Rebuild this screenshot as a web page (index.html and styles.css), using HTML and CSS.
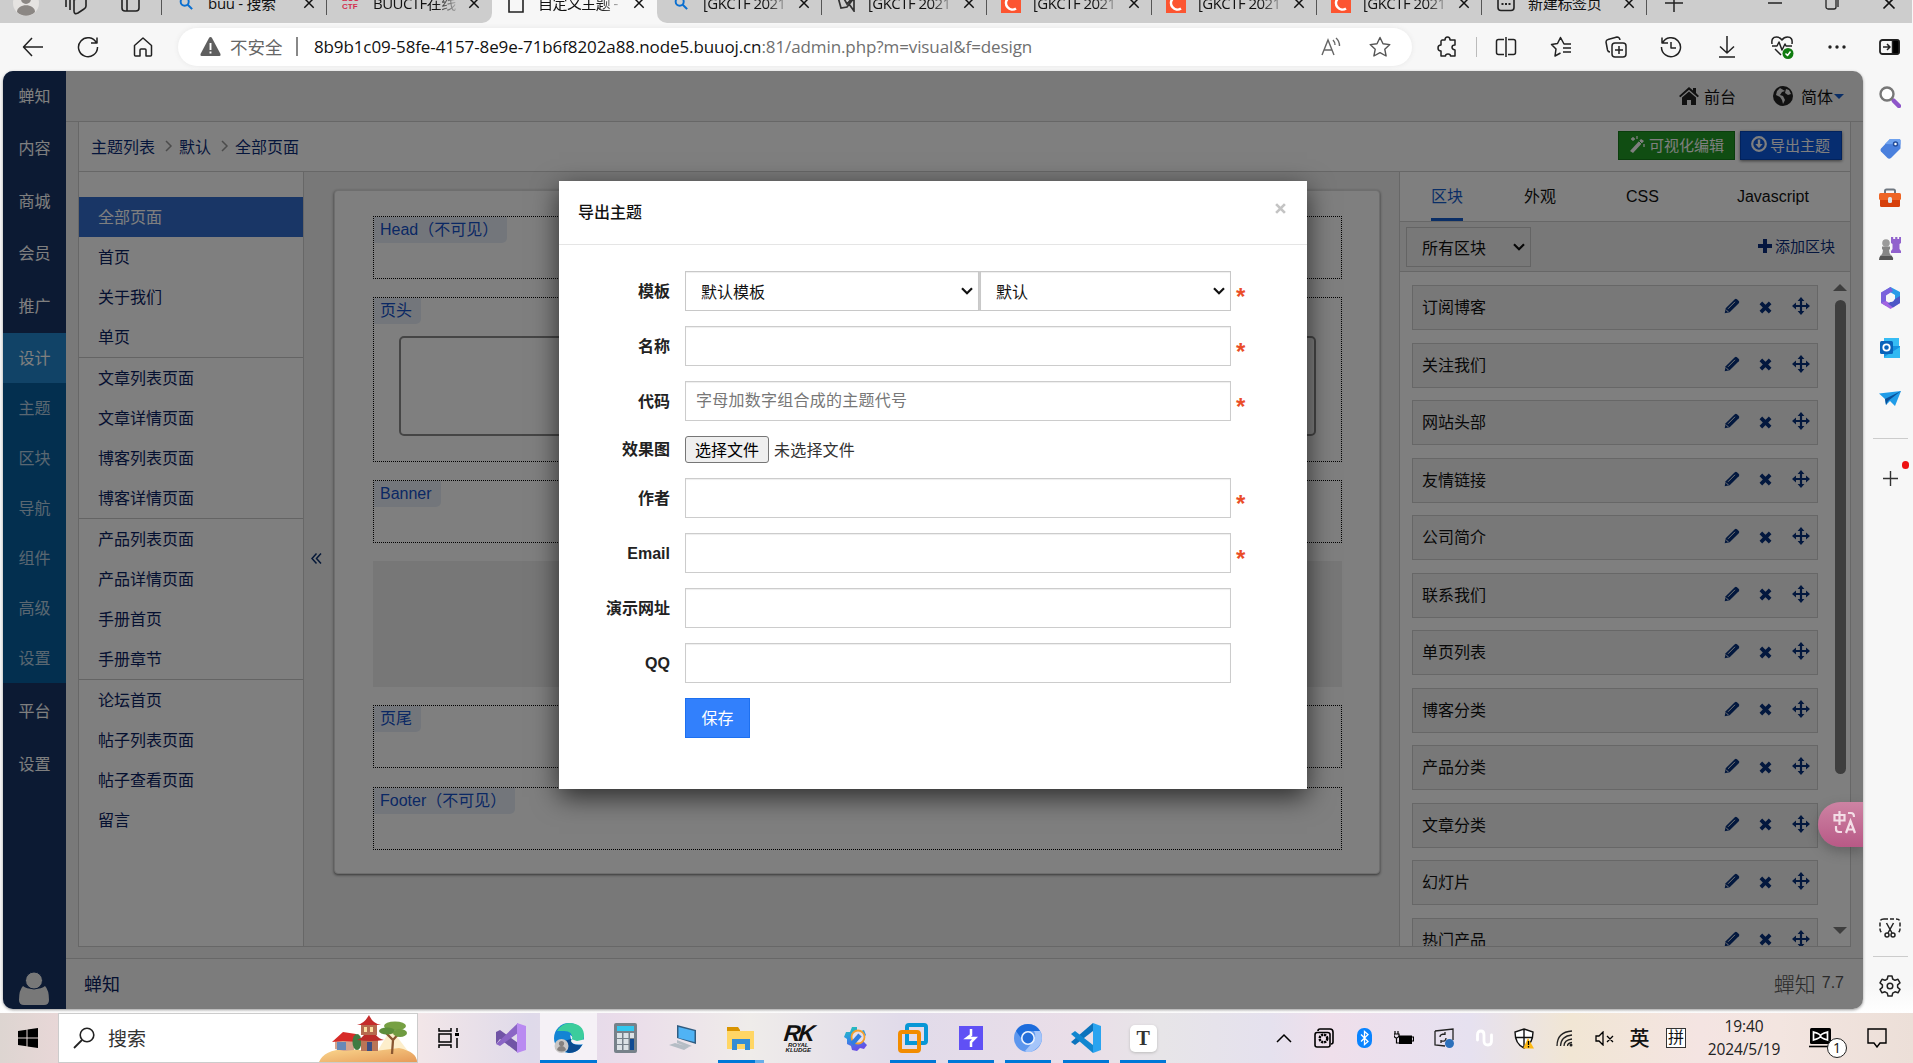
FILE: index.html
```html
<!DOCTYPE html>
<html lang="zh-CN">
<head>
<meta charset="utf-8">
<title>导出主题</title>
<link rel="stylesheet" href="styles.css">
</head>
<body>
<svg width="0" height="0" class="defs">
  <symbol id="x" viewBox="0 0 14 14"><path d="M1.5 1.5l11 11M12.5 1.5l-11 11" fill="none" stroke="currentColor" stroke-width="1.7"/></symbol>
  <symbol id="bing" viewBox="0 0 16 16"><circle cx="6.5" cy="6.5" r="4.6" fill="none" stroke="#0a6fd0" stroke-width="2.2"/><path d="M10 10l5 5" stroke="#0a6fd0" stroke-width="2.4"/></symbol>
  <symbol id="cblog" viewBox="0 0 20 20"><path d="M0 0h20v20H0z" fill="#fc5531"/><path d="M15 4.500A6.500 6.500 0 1 0 15 15.500" fill="none" stroke="#fff" stroke-width="2.600"/></symbol>
  <symbol id="pen" viewBox="0 0 16 16"><path d="M.7 15.300l1-5L10.800 1.200q1-1 2.200 0l1.800 1.800q1 1 0 2.200L5.700 14.300z" fill="currentColor"/><path d="M4 10.800L11 3.800M2 11.600L4.400 14" stroke="#e9e9e9" stroke-width="1"/></symbol>
  <symbol id="del" viewBox="0 0 14 14"><path d="M2 2l10 10M12 2L2 12" stroke="currentColor" stroke-width="4" fill="none"/></symbol>
  <symbol id="move" viewBox="0 0 18 18"><path d="M9 2v14M2 9h14" stroke="currentColor" stroke-width="2.200"/><path d="M9 0l3.400 4H5.600zM9 18l3.400-4H5.600zM0 9l4-3.400v6.800zM18 9l-4-3.400v6.800z" fill="currentColor"/></symbol>
  <symbol id="chev" viewBox="0 0 12 8"><path d="M1 1.200l5 5 5-5" fill="none" stroke="currentColor" stroke-width="2.200"/></symbol>
</svg>

<header class="tabstrip">
  <div class="tabs-before">
    <span class="tool w52"><svg width="26" height="26" viewBox="0 0 26 26"><circle cx="13" cy="13" r="13" fill="#e5e3e1"/><circle cx="13" cy="9" r="5" fill="#8b8784"/><path d="M4 22c0-9 18-9 18 0-5 5-13 5-18 0z" fill="#8b8784"/></svg></span>
    <span class="tool w48"><svg width="22" height="24" viewBox="0 0 22 24" fill="none" stroke="#222" stroke-width="1.600"><path d="M9 9l9-5q3-1 3 2v9q0 2-2 3l-6 4q-4 2-4-2zM5 19V8l8-5M1 16V7l7-5"/></svg></span>
    <span class="tool w58"><svg width="20" height="20" viewBox="0 0 20 20" fill="none" stroke="#222" stroke-width="1.600"><rect x="1" y="1" width="17" height="17" rx="3"/><path d="M1 6h17M6 1v17"/></svg></span>
    <div class="tab"><i class="fav"><svg width="14" height="14"><use href="#bing"/></svg></i><span>buu - 搜索</span><svg class="tx"><use href="#x"/></svg></div>
    <div class="tab"><i class="fav"><b class="buu">BUU<br>CTF</b></i><span class="fade">BUUCTF在线</span><svg class="tx"><use href="#x"/></svg></div>
  </div>
  <div class="tab active"><i class="fav"><svg width="16" height="20" viewBox="0 0 16 20"><path d="M1 1h9l5 5v13H1zM10 1v5h5" fill="none" stroke="#222" stroke-width="1.600"/></svg></i><span class="fade">自定义主题 -</span><svg class="tx"><use href="#x"/></svg></div>
  <div class="tabs-after">
    <div class="tab"><i class="fav"><svg width="14" height="14"><use href="#bing"/></svg></i><span class="fade">[GKCTF 2021</span><svg class="tx"><use href="#x"/></svg></div>
    <div class="tab"><i class="fav"><svg width="18" height="18" viewBox="0 0 18 18"><path d="M1 3l3 11 6-1L17 4v13l-5-7M5 1l5 9 6-7" fill="none" stroke="#333" stroke-width="1.700"/></svg></i><span class="fade">[GKCTF 2021</span><svg class="tx"><use href="#x"/></svg></div>
    <div class="tab"><i class="fav"><svg width="20" height="20"><use href="#cblog"/></svg></i><span class="fade">[GKCTF 2021</span><svg class="tx"><use href="#x"/></svg></div>
    <div class="tab"><i class="fav"><svg width="20" height="20"><use href="#cblog"/></svg></i><span class="fade">[GKCTF 2021</span><svg class="tx"><use href="#x"/></svg></div>
    <div class="tab"><i class="fav"><svg width="20" height="20"><use href="#cblog"/></svg></i><span class="fade">[GKCTF 2021</span><svg class="tx"><use href="#x"/></svg></div>
    <div class="tab"><i class="fav"><svg width="18" height="18" viewBox="0 0 18 18"><rect x="1" y="1" width="16" height="15.500" rx="3" fill="none" stroke="#222" stroke-width="1.600"/><path d="M4.500 10h2M8 10h2M11.500 10h2" stroke="#222" stroke-width="2"/></svg></i><span>新建标签页</span><svg class="tx"><use href="#x"/></svg></div>
    <span class="tool w56"><svg width="18" height="18" viewBox="0 0 18 18"><path d="M9 0v18M0 9h18" stroke="#222" stroke-width="1.500"/></svg></span>
    <span class="winbtns">
      <svg width="14" height="14" viewBox="0 0 14 14"><path d="M0 7h14" stroke="#222" stroke-width="1.500"/></svg>
      <svg width="14" height="16" viewBox="0 0 14 16" fill="none" stroke="#222" stroke-width="1.300"><rect x="1" y="3" width="10" height="11" rx="2"/><path d="M4 1h7q2 0 2 2v9"/></svg>
      <svg width="14" height="14"><use href="#x"/></svg>
    </span>
  </div>
</header>

<div class="toolbar">
  <span class="tb"><svg width="22" height="20" viewBox="0 0 22 20"><path d="M21 10H1.500M10 1L1.500 10l8.500 9"/></svg></span>
  <span class="tb"><svg width="22" height="22" viewBox="0 0 22 22"><path d="M19.500 7A9.500 9.500 0 1 0 20.500 11M20 1.500V7h-6"/></svg></span>
  <span class="tb"><svg width="20" height="20" viewBox="0 0 20 20"><path d="M1.500 8.500L10 1l8.500 7.500V18q0 1-1 1H13v-6q0-1-1-1H8q-1 0-1 1v6H2.500q-1 0-1-1z"/></svg></span>
  <div class="address">
    <svg class="warn" width="21" height="19" viewBox="0 0 21 19"><path d="M10.500 0q1 0 1.500 1l8.500 16q.5 2-1 2H1.500q-1.500 0-1-2L9 1q.500-1 1.500-1z" fill="#5f5f5f"/><path d="M10.500 6v7M10.500 14.500v2" stroke="#fff" stroke-width="1.900"/></svg>
    <span class="insecure">不安全</span><i class="bar"></i>
    <span class="url">8b9b1c09-58fe-4157-8e9e-71b6f8202a88.node5.buuoj.cn<em>:81/admin.php?m=visual&amp;f=design</em></span>
    <svg class="read" width="20" height="20" viewBox="0 0 20 20" fill="none" stroke="#666" stroke-width="1.400"><path d="M1 18L7 3l6 15M3 13h8M12 3q2 2 2 5M15 1q3.500 3 3.500 8"/></svg>
    <svg class="star" width="22" height="22" viewBox="0 0 22 22"><path d="M11 1.500l3 6.300 6.800.8-5 4.700 1.300 6.700L11 16.700 4.900 20l1.300-6.700-5-4.700 6.800-.8z" fill="none" stroke="#555" stroke-width="1.400" stroke-linejoin="round"/></svg>
  </div>
  <span class="tb"><svg width="20" height="22" viewBox="0 0 20 22"><path d="M5 4h3q0-3 2.500-3T13 4h5v5q-3 0-3 2.200T18 14v6h-4.500q0-2-2.500-2t-2.500 2H4v-5Q1 15 1 12t3-3V5z"/></svg></span>
  <i class="tdiv"></i>
  <span class="tb"><svg width="22" height="20" viewBox="0 0 22 20"><path d="M9 2.500H3.500q-2 0-2 2v11q0 2 2 2H9M13 2.500h5.500q2 0 2 2v11q0 2-2 2H13M11 0v20"/></svg></span>
  <span class="tb"><svg width="22" height="22" viewBox="0 0 22 22"><path d="M18 8h-4L10.500 1.500 7.500 7.500l-6 1 4.500 4.500-1 7 5.500-3M13 12h8M13 16h8M15 8h6"/></svg></span>
  <span class="tb"><svg width="22" height="22" viewBox="0 0 22 22"><rect x="7" y="7" width="14" height="14" rx="3"/><path d="M14 10v8M10 14h8M5 16q-2 0-2.500-2L1 6q0-2 2-2.500L12 1q2.500 0 3 3"/></svg></span>
  <span class="tb"><svg width="22" height="22" viewBox="0 0 22 22"><path d="M2.500 7A9.500 9.500 0 1 1 1.500 11M2 1.500V7h6M11 6v6h5"/></svg></span>
  <span class="tb"><svg width="18" height="22" viewBox="0 0 18 22"><path d="M9 0v17M2 10.500L9 17l7-6.500M1 21h16"/></svg></span>
  <span class="tb"><svg width="24" height="24" viewBox="0 0 24 24"><path d="M2 9Q1 2 6.500 2 10 2 12 5q2-3 5.500-3Q23 2 22 9M2 11h5l2-4 3 8 3-6 1 2h6M5 14l6 6"/><circle cx="18" cy="18.500" r="5.500" fill="#107c10" stroke="none"/><path d="M15.500 18.500l2 2 3-4" stroke="#fff"/></svg></span>
  <span class="tb"><svg width="20" height="6" viewBox="0 0 20 6"><g fill="#222" stroke="none"><circle cx="3" cy="3" r="1.700"/><circle cx="10" cy="3" r="1.700"/><circle cx="17" cy="3" r="1.700"/></g></svg></span>
  <span class="tb last"><svg width="21" height="16" viewBox="0 0 21 16"><rect x="1" y="1" width="19" height="14" rx="2.500" stroke-width="1.800"/><path d="M13.500 1H18q2 0 2 2v10q0 2-2 2h-4.500z" fill="#000"/><path d="M4 8h6M8 5l3 3-3 3"/></svg></span>
</div>

<main>
  <div class="page">
    <nav class="nav">
      <a>蝉知</a><a>内容</a><a>商城</a><a>会员</a><a>推广</a><a class="on">设计</a>
      <div class="sub"><a>主题</a><a>区块</a><a>导航</a><a>组件</a><a>高级</a><a>设置</a></div>
      <a>平台</a><a>设置</a>
      <svg class="user" width="30" height="33" viewBox="0 0 30 33"><path d="M4 14q3 3 11 3t11-3q4 4 4 14 0 5-5 5H5q-5 0-5-5 0-10 4-14z" fill="#f1f1f1"/><circle cx="15" cy="8.500" r="8.500" fill="#f1f1f1" stroke="#183468"/></svg>
    </nav>
    <div class="content">
      <div class="topbar">
        <a><svg width="20" height="18" viewBox="0 0 20 18"><path d="M10 0l4 3.500V1h3v5l3 3-1.400 1.300L10 2.800 1.400 10.300 0 9z"/><path d="M3 10.500l7-6 7 6V18h-5v-5H8v5H3z"/></svg>前台</a>
        <a class="lang"><svg width="20" height="20" viewBox="0 0 20 20"><circle cx="10" cy="10" r="10"/><path d="M7 2l-3 3-1 4 4 2 2 3 1 4 2-4-2-4-3-1 2-3 3-1zM13 3l-1 4 3 2 3-1-2-4z" fill="#e6e6e6"/></svg>简体<i class="caret"></i></a>
      </div>
      <div class="work">
        <div class="crumbs">
          <span>主题列表</span><svg width="8" height="12" viewBox="0 0 8 12"><path d="M1 1l5 5-5 5"/></svg><span>默认</span><svg width="8" height="12" viewBox="0 0 8 12"><path d="M1 1l5 5-5 5"/></svg><span>全部页面</span>
          <a class="btn green"><svg width="17" height="17" viewBox="0 0 17 17"><path d="M1 15L12 3l3 2L4 17z" fill="#fff"/><path d="M10 5l3 3" stroke="#1fa020"/><path d="M4 1v4M2 3h4M8 0v3M15 8v3" stroke="#fff" stroke-width="1.300"/></svg>可视化编辑</a>
          <a class="btn blue"><svg width="16" height="16" viewBox="0 0 16 16"><circle cx="8" cy="8" r="6.800" fill="none" stroke="#fff" stroke-width="2.200"/><path d="M8 3.500V9" stroke="#fff" stroke-width="2.400"/><path d="M4.300 8h7.400L8 12.300z" fill="#fff"/></svg>导出主题</a>
        </div>
        <div class="cols">
          <div class="pages">
            <div class="grp"><a class="sel">全部页面</a><a>首页</a><a>关于我们</a><a>单页</a></div>
            <div class="grp"><a>文章列表页面</a><a>文章详情页面</a><a>博客列表页面</a><a>博客详情页面</a></div>
            <div class="grp"><a>产品列表页面</a><a>产品详情页面</a><a>手册首页</a><a>手册章节</a></div>
            <div class="grp"><a>论坛首页</a><a>帖子列表页面</a><a>帖子查看页面</a><a>留言</a></div>
          </div>
          <div class="stage">
            <div class="fold"><svg width="11" height="11" viewBox="0 0 11 11"><path d="M5.500.5L1 5.500l4.500 5M10 .5L5.500 5.500l4.500 5" fill="none" stroke="#0a3070" stroke-width="1.500"/></svg></div>
            <div class="canvas">
              <div class="region"><span>Head（不可见）</span></div>
              <div class="region tall"><span>页头</span><div class="inner"></div></div>
              <div class="region"><span>Banner</span></div>
              <div class="void"></div>
              <div class="region tail"><span>页尾</span></div>
              <div class="region"><span>Footer（不可见）</span></div>
            </div>
          </div>
          <div class="side">
            <div class="sidetabs"><a class="on">区块</a><a>外观</a><a>CSS</a><a>Javascript</a></div>
            <div class="filter"><div class="pick">所有区块<svg width="12" height="8"><use href="#chev"/></svg></div><a><svg width="14" height="14" viewBox="0 0 14 14"><path d="M7 0v14M0 7h14" stroke="currentColor" stroke-width="4"/></svg>添加区块</a></div>
            <div class="blocks">
              <div class="list">
                <div class="blk">订阅博客<i><svg><use href="#pen"/></svg><svg><use href="#del"/></svg><svg><use href="#move"/></svg></i></div>
                <div class="blk">关注我们<i><svg><use href="#pen"/></svg><svg><use href="#del"/></svg><svg><use href="#move"/></svg></i></div>
                <div class="blk">网站头部<i><svg><use href="#pen"/></svg><svg><use href="#del"/></svg><svg><use href="#move"/></svg></i></div>
                <div class="blk">友情链接<i><svg><use href="#pen"/></svg><svg><use href="#del"/></svg><svg><use href="#move"/></svg></i></div>
                <div class="blk">公司简介<i><svg><use href="#pen"/></svg><svg><use href="#del"/></svg><svg><use href="#move"/></svg></i></div>
                <div class="blk">联系我们<i><svg><use href="#pen"/></svg><svg><use href="#del"/></svg><svg><use href="#move"/></svg></i></div>
                <div class="blk">单页列表<i><svg><use href="#pen"/></svg><svg><use href="#del"/></svg><svg><use href="#move"/></svg></i></div>
                <div class="blk">博客分类<i><svg><use href="#pen"/></svg><svg><use href="#del"/></svg><svg><use href="#move"/></svg></i></div>
                <div class="blk">产品分类<i><svg><use href="#pen"/></svg><svg><use href="#del"/></svg><svg><use href="#move"/></svg></i></div>
                <div class="blk">文章分类<i><svg><use href="#pen"/></svg><svg><use href="#del"/></svg><svg><use href="#move"/></svg></i></div>
                <div class="blk">幻灯片<i><svg><use href="#pen"/></svg><svg><use href="#del"/></svg><svg><use href="#move"/></svg></i></div>
                <div class="blk">热门产品<i><svg><use href="#pen"/></svg><svg><use href="#del"/></svg><svg><use href="#move"/></svg></i></div>
              </div>
              <div class="scroll"><i class="up"></i><i class="thumb"></i><i class="down"></i></div>
            </div>
          </div>
        </div>
      </div>
      <footer class="foot"><a>蝉知</a><span><b>蟬知</b> 7.7</span></footer>
    </div>
    <div class="backdrop"></div>
    <div class="modal">
      <div class="mhead"><h4>导出主题</h4><svg width="11" height="11" viewBox="0 0 10 10"><path d="M1 1l8 8M9 1L1 9" stroke="#c4c4c4" stroke-width="2.400"/></svg></div>
      <form>
        <div class="row"><label>模板</label><div class="picks"><div class="pick">默认模板<svg width="12" height="8"><use href="#chev"/></svg></div><div class="pick second">默认<svg width="12" height="8"><use href="#chev"/></svg></div></div><em>*</em></div>
        <div class="row"><label>名称</label><input type="text"><em>*</em></div>
        <div class="row"><label>代码</label><input type="text" placeholder="字母加数字组合成的主题代号"><em>*</em></div>
        <div class="row file"><label>效果图</label><button type="button">选择文件</button><span>未选择文件</span></div>
        <div class="row"><label>作者</label><input type="text"><em>*</em></div>
        <div class="row"><label class="latin">Email</label><input type="text"><em>*</em></div>
        <div class="row"><label>演示网址</label><input type="text"></div>
        <div class="row"><label class="latin">QQ</label><input type="text"></div>
        <div class="row"><label></label><button type="button" class="save">保存</button></div>
      </form>
    </div>
    <div class="translate"><svg width="24" height="24" viewBox="0 0 24 24" fill="none" stroke="#f3dde6" stroke-width="2.200"><path d="M1.500 4h10v5.500h-10zM6.500 0v14M15 2h3q3 0 3 4M3 15v3q0 3 3 3h3M13 22l4.500-12L22 22M14.500 18.500h6"/></svg></div>
  </div>
  <aside class="edge">
    <span class="first"><svg width="22" height="22" viewBox="0 0 22 22"><circle cx="8" cy="8" r="6.500" fill="#fff" stroke="#777" stroke-width="2.400"/><path d="M13 13l2 2" stroke="#777" stroke-width="3"/><path d="M15 15l5 5" stroke="#8e55c9" stroke-width="4.500" stroke-linecap="round"/></svg></span>
    <span><svg width="21" height="21" viewBox="0 0 21 21"><path d="M10 1h9q1.500 0 1.500 1.500v8L11 20q-2 1.500-3.500 0L1 13.500q-1-1.500 0-3z" fill="#4a80dd"/><path d="M10 1h9q1.500 0 1.500 1.500v4L5 6z" fill="#6ea2ef"/><circle cx="15.500" cy="6" r="2" fill="#fff" stroke="#224c9c" stroke-width="1.500"/></svg></span>
    <span><svg width="22" height="20" viewBox="0 0 22 20"><path d="M6 6V3q0-1.500 1.500-1.500h7Q16 1.500 16 3v3" fill="none" stroke="#6f7780" stroke-width="2"/><rect x="1" y="9" width="20" height="10" rx="1.500" fill="#d6400c"/><rect y="5" width="22" height="7" rx="1.500" fill="#ee6525"/><rect x="9" y="9" width="4" height="6" rx="1.500" fill="#e1e4e8"/></svg></span>
    <span><svg width="22" height="23" viewBox="0 0 22 23"><path d="M12 0h2.200v2h2V0h2.200v2h1.700V0H22v6l-1.500 1v5L22 14v2H12v-2l1.500-2V7L12 6z" fill="#9162cd"/><circle cx="7" cy="6" r="3.800" fill="#9b9b9b"/><path d="M3 9.500h8v3H10q0 4 2 6H2q2-2 2-6H3z" fill="#858585"/><path d="M1.500 18.500h11q2 2 1.500 4.500H0q0-3 1.500-4.500z" fill="#555"/></svg></span>
    <span><svg width="21" height="22" viewBox="0 0 21 22"><path d="M10.500 0L20 5v11l-5-3V8l-5-3-5 3-4-2z" fill="#2b9be8"/><path d="M10.500 0L1 5.500V16l5 3V8.500L13 4z" fill="#7a62dc"/><path d="M1 16l9.500 6 9.500-6v-3.500L15 13l-4.500 3.500L6 14z" fill="#a264e2"/><path d="M20 9v7l-7 4.500-5-4L15 12z" fill="#4c57c6"/><circle cx="10.500" cy="11" r="4" fill="#f7f7f7"/></svg></span>
    <span><svg width="20" height="20" viewBox="0 0 20 20"><rect x="4" width="15" height="11" fill="#36bcf4"/><path d="M4 8h16v12H4z" fill="#1591df"/><path d="M4 19l16-10v11H4z" fill="#31b9f2"/><rect y="3" width="13" height="13" rx="1.500" fill="#0963ba"/><circle cx="6.500" cy="9.500" r="3.200" fill="none" stroke="#fff" stroke-width="1.800"/></svg></span>
    <span><svg width="22" height="15" viewBox="0 0 22 15"><path d="M0 2.500L22 0 16 15l-5-5-4 4-1-6z" fill="#209ce8"/><path d="M6 8L22 0 9 10l-2 4z" fill="#0b5099"/></svg></span>
    <i class="hr"></i>
    <span class="add"><svg width="15" height="15" viewBox="0 0 15 15"><path d="M7.500 0v15M0 7.500h15" stroke="#333" stroke-width="1.400"/></svg><b class="dot"></b></span>
    <span class="snip"><svg width="22" height="20" viewBox="0 0 22 20" fill="none" stroke="#222" stroke-width="1.500"><path d="M5 1h12" stroke-dasharray="4 2"/><path d="M5 1Q1 1 1 4v7q0 3 3 4M17 1q4 0 4 3v7q0 3-3 4" stroke-dasharray="4 2"/><path d="M7.500 5l5.500 10M14.500 5L9 15"/><circle cx="8" cy="17" r="2"/><circle cx="14" cy="17" r="2"/></svg></span>
    <i class="hr"></i>
    <span><svg width="22" height="22" viewBox="0 0 22 22" fill="none" stroke="#222" stroke-width="1.500" stroke-linejoin="round"><path d="M9 1h4l.7 3 2.300 1.300 3-1 2 3.500-2.400 2v2.500l2.400 2-2 3.500-3-1-2.300 1.300L13 21H9l-.7-2.900L6 16.800l-3 1-2-3.500 2.400-2V9.800L1 7.800l2-3.500 3 1L8.300 4z"/><circle cx="11" cy="11" r="2.800"/></svg></span>
  </aside>
</main>

<div class="taskbar">
  <span class="start"><svg width="20" height="20" viewBox="0 0 20 20"><path d="M0 3l8.500-1.300v7.800H0zM9.500 1.500L20 0v9.500H9.500zM0 10.500h8.500v7.800L0 17zM9.500 10.500H20V20l-10.500-1.500z"/></svg></span>
  <div class="search"><svg width="22" height="22" viewBox="0 0 22 22"><circle cx="14" cy="8" r="6.800" fill="none" stroke="#222" stroke-width="1.600"/><path d="M9 13l-8 8" stroke="#222" stroke-width="1.800"/></svg><span>搜索</span>
    <svg class="scene" width="98" height="47" viewBox="0 0 98 47"><defs><linearGradient id="sand" x2="1" y2="1"><stop stop-color="#fbd990"/><stop offset="1" stop-color="#e59a58"/></linearGradient></defs><path d="M72 14l20 26H56z" fill="#fdeecb"/><path d="M0 47Q5 35 26 34l30 2 24-3q18 4 18 14z" fill="url(#sand)"/><path d="M16 24h19v11l-10 1-9-2z" fill="#d5a38c"/><path d="M18 27h9v8h-9z" fill="#6789b8"/><path d="M13 27l11-10 13 2 3 8-16-1z" fill="#d72b28"/><ellipse cx="38" cy="27" rx="4.500" ry="8" fill="#3f7b43"/><path d="M42 24h17v12H42z" fill="#b97557"/><path d="M48 27h5v9h-5z" fill="#3c4e83"/><path d="M38 25q4-1 7-5h12q3 4 8 5-13 2-27 0z" fill="#bb2d29"/><path d="M42 10h16v10H42z" fill="#b66b4f"/><path d="M45 12h3v5h-3zM51 12h3v5h-3z" fill="#fae0a2"/><path d="M38 10q7-1 12-10 4 9 12 10z" fill="#c52c2b"/><path d="M73 39l1-14-7-7M74 25l8-9" stroke="#895631" stroke-width="2.300" fill="none"/><ellipse cx="76" cy="11" rx="11" ry="4.500" fill="#76a043"/><ellipse cx="68" cy="16" rx="8" ry="3.500" fill="#5d8e3b"/><ellipse cx="81" cy="18" rx="7" ry="4" fill="#6f9b40"/></svg>
  </div>
  <div class="apps">
    <span><svg width="21" height="20" viewBox="0 0 21 20" fill="none" stroke="#000" stroke-width="1.500"><path d="M1 0v3h12V0M1 20v-3h12v3M1 6h12v8H1zM19 0v4M19 10v10"/><path d="M17 6.500h4" stroke-width="3"/></svg></span>
    <span><svg width="30" height="30" viewBox="0 0 30 30"><path d="M0 9l4-2 18 13v3l-1 6L4 16l-4 5z" fill="#7154a6"/><path d="M4 23l-4-2 22-21v10L4 23z" fill="#8b65c5"/><path d="M21 0l9 3v24l-9 3z" fill="#b98af1"/></svg></span>
    <span class="cur"><svg width="30" height="30" viewBox="0 0 30 30"><circle cx="15" cy="15" r="15" fill="#1384d4"/><path d="M3 8Q8 0 16 0q14 1 14 13 0 7-8 7-8 0-4-4 1-8-8-8-5 0-7 0z" fill="#3ccd9c"/><path d="M17 16q-1 7 11 6-4 8-13 8-9-3-5-12z" fill="#0a4c91"/><path d="M16 12q4 1 1 6 2 5 13 3l2-5-9 2-6-2z" fill="#f5f1f5"/><circle cx="7.500" cy="23" r="7" fill="#c9c7c6"/><circle cx="7.500" cy="20.500" r="2.600" fill="#85817f"/><path d="M3 27q1-4 4.500-4t4.500 4q-4 3-9 0z" fill="#85817f"/></svg></span>
    <span><svg width="23" height="30" viewBox="0 0 23 30"><rect width="23" height="30" rx="2" fill="#77818a"/><path d="M3 3h17v5H3z" fill="#32c7ef"/><path d="M3 10h5v5H3zM9.500 10h5v5h-5zM16 10h4v5h-4zM3 16h5v5H3zM9.500 16h5v5h-5zM3 22h5v5H3zM9.500 22h5v5h-5z" fill="#dce2e6"/><path d="M16 16h4v11h-4z" fill="#104a92"/></svg></span>
    <span><svg width="28" height="26" viewBox="0 0 28 26"><path d="M8 0l19 5v14L8 13z" fill="#315c80"/><path d="M9.500 2l16 4v11l-16-4z" fill="#50b3f5"/><path d="M8 15l15 6-4 1-11-4zM0 20l6-2 14 4-5 3z" fill="#b5bdc5"/></svg></span>
    <span class="run wide"><svg width="28" height="23" viewBox="0 0 28 23"><path d="M0 0h11l2 3v4H0z" fill="#d99400"/><path d="M0 4h27v18H0z" fill="#ffd665"/><path d="M5 12h18v11h-5v-6h-8v6H5z" fill="#348dd5"/></svg></span>
    <span class="rk"><b>RK</b><small>ROYAL KLUDGE</small></span>
    <span><svg width="24" height="26" viewBox="0 0 24 26"><defs><linearGradient id="gg" x2=".3" y2="1"><stop stop-color="#25c9b0"/><stop offset=".5" stop-color="#2d93e5"/><stop offset="1" stop-color="#6750e6"/></linearGradient></defs><path d="M8 2h5v3l4 1 3-1 2 5-3 3 1 4 3 3-3 4-4-1-3 3-5-1-1-4-4-2 0-5-3-2 2-5 4 0z" fill="url(#gg)"/><circle cx="14" cy="12" r="6.500" fill="#e4dfe9" stroke="#f5a12c" stroke-width="1.800"/><path d="M8 19l8-9" stroke="#317ddf" stroke-width="4.500"/></svg></span>
    <span class="run"><svg width="30" height="30" viewBox="0 0 30 30" fill="none" stroke-width="4"><rect x="9" y="2" width="19" height="18" rx="2" stroke="#0797d6"/><rect x="2" y="9" width="19" height="19" rx="2" stroke="#f28c00"/><path d="M9 13v7h9" stroke="#0797d6"/></svg></span>
    <span class="run"><svg width="24" height="24" viewBox="0 0 24 24"><path d="M0 0h24v24H0z" fill="#6050f5"/><path d="M12 3v6L8 12h8l-4 4v5" fill="none" stroke="#fff" stroke-width="2.500"/></svg></span>
    <span class="run"><svg width="28" height="28" viewBox="0 0 28 28"><circle cx="14" cy="14" r="14" fill="#5d97ee"/><path d="M2 7Q6 0 14 0t12 7H14q-6 1-7 7z" fill="#1d6cdc"/><path d="M26 7q5 10-3 17t-12 3l8-9q4-5 1-11z" fill="#a5c5fa"/><circle cx="14" cy="14" r="6.200" fill="#256fda" stroke="#eaf2ff" stroke-width="1.600"/></svg></span>
    <span class="run"><svg width="30" height="30" viewBox="0 0 30 30"><path d="M22 0l8 3v24l-8 3z" fill="#2aa4f0"/><path d="M22 0v8L4 22l-4-3z" fill="#0c73bd"/><path d="M22 30v-8L4 8l-4 3z" fill="#1187d0"/></svg></span>
    <span class="run"><b class="typora">T</b></span>
  </div>
  <div class="tray">
    <span><svg width="16" height="10" viewBox="0 0 16 10"><path d="M1 9l7-7 7 7" fill="none" stroke="#000" stroke-width="1.500"/></svg></span>
    <span><svg width="20" height="20" viewBox="0 0 20 20" fill="none" stroke="#000" stroke-width="1.600"><path d="M4 3q0-2 2-2h10q3 0 3 3v10q0 2-2 2M1 7q0-2.500 2-2.500h10.500q2.500 0 2.500 2V17q0 2-2 2H3q-2 0-2-2z"/><circle cx="9.500" cy="10.500" r="3.800" stroke-width="2.400" stroke-dasharray="2.200 .800"/></svg></span>
    <span><svg width="15" height="20" viewBox="0 0 15 20"><rect width="15" height="20" rx="7" fill="#0a84ff"/><path d="M4 6.500l7 7-3.500 3v-13l3.500 3-7 7" fill="none" stroke="#fff" stroke-width="1.300"/></svg></span>
    <span><svg width="20" height="14" viewBox="0 0 20 14"><path d="M5 4.500h13V13H5z"/><path d="M18 6h1.500v4H18M0 3h5v2q-1 2-2.500 2T0 5zM1 0v3M4 0v3M2.500 7v5H5" stroke="#000" fill="none" stroke-width="1.200"/></svg></span>
    <span><svg width="20" height="20" viewBox="0 0 20 20" fill="none" stroke="#222" stroke-width="1.300"><path d="M1 3l18-2v11M1 3v14l10 1M6 9q0-3 5-3M11 4v3M12 10q0 4-5 3M7 15v-3"/><circle cx="15.500" cy="15.500" r="4.500" fill="#2c70bb" stroke="none"/></svg></span>
    <span><svg width="17" height="18" viewBox="0 0 17 18"><path d="M1.500 11V6q0-4 3.500-4 3 0 3 4v6q0 4 4 4 3.500 0 3.500-4V6" fill="none" stroke="#fff" stroke-width="2.800" stroke-linecap="round"/></svg></span>
    <span><svg width="20" height="21" viewBox="0 0 20 21"><path d="M10 1l9 3q0 12-9 16Q1 16 1 4zM10 1v18M1 9.500h18" fill="#fff" stroke="#111" stroke-width="1.400"/><path d="M14 10l6 10.500H9z" fill="#fdb913"/><path d="M14.500 13v4M14.500 18v1.500" stroke="#000" stroke-width="1.300"/></svg></span>
    <span><svg width="17" height="17" viewBox="0 0 17 17" fill="none" stroke="#222" stroke-width="1.300"><path d="M1 16Q1 2 16 1M4.500 16Q5 6 16 5M8 16q0-6 8-7M11.500 16q0-3 4.500-3.500"/><circle cx="15" cy="15" r="1.500" fill="#222" stroke="none"/></svg></span>
    <span><svg width="19" height="15" viewBox="0 0 19 15" fill="none" stroke="#000" stroke-width="1.300"><path d="M1 5h3l4-4v13l-4-4H1zM12 5l6 6M18 5l-6 6"/></svg></span>
    <b class="ime">英</b><b class="pin">拼</b>
    <div class="clock">19:40<br>2024/5/19</div>
    <div class="msg"><svg width="23" height="20" viewBox="0 0 23 20"><rect x="1" width="21" height="16" rx="1.500"/><path d="M0 18.500h23" stroke="#000" stroke-width="1.600"/><path d="M4.500 4v8q7-2 7-4t7-4v8q-7-2-7-4t-7-4z" fill="none" stroke="#fff" stroke-width="1.700"/></svg><i>1</i></div>
    <svg class="note" width="20" height="20" viewBox="0 0 20 20"><path d="M1 1h18v14h-6l-3 4-3-4H1z" fill="none" stroke="#000" stroke-width="1.400"/></svg>
  </div>
</div>
</body>
</html>
```
FILE: styles.css
```css
* { box-sizing: border-box; }
body { margin: 0; width: 1913px; height: 1063px; overflow: hidden; display: flex; flex-direction: column; background: #f7f7f7; font: 16px "Liberation Sans", "Noto Sans CJK SC", sans-serif; color: #111; }
i, em { font-style: normal; }
svg { display: block; flex: none; }
.defs { position: absolute; }

/* browser tabs */
.tabstrip { height: 23px; flex: none; display: flex; overflow: hidden; background: #f7f7f7; font: 15px "Open Sans", "Noto Sans CJK SC", sans-serif; }
.tabs-before, .tabs-after { display: flex; height: 40px; margin-top: -17px; background: #cdcdcd; }
.tabs-before { width: 492px; border-bottom-right-radius: 10px; }
.tabs-after { width: 1255px; border-bottom-left-radius: 10px; }
.tool { display: flex; align-items: center; justify-content: center; }
.w52 { width: 52px; }
.w48 { width: 48px; }
.w58 { width: 62px; border-right: 1px solid #555; height: 32px; padding-top: 8px; }
.w56 { width: 54px; }
.tab { width: 165px; height: 40px; display: flex; align-items: center; padding-left: 13px; white-space: nowrap; flex: none; }
.tab .fav { width: 22px; display: flex; justify-content: center; flex: none; }
.tab span { width: 84px; flex: none; margin-left: 11px; letter-spacing: -.3px; line-height: 20px; }
.tab .fade { letter-spacing: -.55px; -webkit-mask: linear-gradient(90deg, #000 75%, transparent 105%); mask: linear-gradient(90deg, #000 75%, transparent 105%); }
.tab .tx { width: 12px; height: 12px; margin-left: 11px; margin-right: 11px; }
.tab::after { content: ""; width: 1px; height: 32px; align-self: flex-start; background: #555; }
.tab.active { margin-top: -17px; }
.tab.active::after { visibility: hidden; }
.tabs-before .tab:last-child::after { visibility: hidden; }
.buu { color: #d32f4f; font: bold 8px/8px "Liberation Sans"; width: 18px; }
.winbtns { display: flex; align-items: center; justify-content: space-between; width: 128px; margin-left: 67px; }

/* browser toolbar */
.toolbar { height: 48px; flex: none; display: flex; align-items: center; padding-left: 5px; background: #f7f7f7; padding-bottom: 1px; }
.tb { width: 55.300px; display: flex; justify-content: center; flex: none; }
.tb svg { fill: none; stroke: #222; stroke-width: 1.500; stroke-linejoin: round; }
.tb.last { width: 48px; }
.address { width: 1234px; height: 38px; margin: 0 7px; background: #fff; border-radius: 19px; display: flex; align-items: center; padding-left: 22px; box-shadow: 0 0 5px #e7e7e7; flex: none; font-family: "Open Sans", "Noto Sans CJK SC", sans-serif; }
.insecure { font-size: 17.500px; color: #666; margin-left: 9px; width: 56px; }
.bar { width: 2px; height: 19px; background: #888; margin: 0 16px 0 10px; }
.url { width: 718px; font-size: 17px; letter-spacing: -.1px; white-space: nowrap; }
.url em { color: #707070; }
.read { margin-left: 289px; }
.star { margin-left: 28px; }
.tdiv { width: 1px; height: 20px; background: #bbb; margin: 0 1px 0 2px; }

main { height: 942px; flex: none; display: flex; background: linear-gradient(#f7f7f7 97%, #fff); }
.page { position: relative; width: 1860px; height: 938px; margin-left: 3px; border-radius: 10px; overflow: hidden; display: flex; background: #f2f2f2; flex: none; box-shadow: 0 1px 3px #999; }

.nav { width: 63px; background: #183466; display: flex; flex-direction: column; flex: none; text-align: center; color: #fff; }
.nav a { height: 50px; line-height: 51px; margin-bottom: 2.400px; flex: none; }
.nav a.on { background: #2387ce; margin: 0; margin-top: .500px; }
.sub { background: #075e9e; height: 300px; color: #b4cfe2; margin-bottom: 3px; flex: none; }
.sub a { display: block; margin: 0; }
.user { margin: auto 0 4px 16px; }

.content { flex: 1; display: flex; flex-direction: column; }
.topbar { height: 51px; border-bottom: 1px solid #cfcfcf; display: flex; justify-content: flex-end; align-items: center; padding-right: 19px; }
.topbar a { display: flex; align-items: center; gap: 5px; }
.topbar a svg { fill: #222; }
.lang { margin-left: 37px; }
.lang svg { margin-right: 3px; }
.caret { border: 5px solid transparent; border-top-color: #145ccd; margin: 5px 0 0 -4px; }
.work { margin: 0 12px; background: #fff; border: solid #cfcfcf; border-width: 0 1px 1px; height: 825px; display: flex; flex-direction: column; }
.crumbs { height: 50px; border-bottom: 1px solid #cfcfcf; display: flex; align-items: center; padding: 0 8px 2px 12px; color: #0c2c78; flex: none; }
.crumbs > svg { margin: 0 6px 0 10px; fill: none; stroke: #999; stroke-width: 1.500; }
.btn { height: 29px; display: flex; align-items: center; color: #fff; font-size: 15px; padding: 0 0 3px 10px; gap: 3px; white-space: nowrap; }
.green { background: #219b24; border: 1px solid #157a18; margin-left: auto; width: 117px; }
.blue { background: #0c5ae0; border: 1px solid #0544b8; margin-left: 5px; width: 102px; box-shadow: 0 1px 3px #777; }
.cols { flex: 1; display: flex; min-height: 0; }
.pages { width: 225px; border-right: 1px solid #cfcfcf; padding-top: 25px; color: #0b2263; flex: none; }
.grp + .grp { border-top: 1px solid #c8c8c8; }
.grp a { display: block; height: 40px; line-height: 41px; padding-left: 19px; }
.grp a.sel { background: #336dcc; color: #fff; }
.stage { flex: 1; background: #f1f1f1; display: flex; }
.fold { width: 30px; padding: 381px 0 0 7px; }
.canvas { width: 1046px; height: 684px; margin-top: 18px; background: #fff; border: 1px solid #ddd; border-radius: 4px; box-shadow: 0 1px 3px #666; padding: 25px 37px 0 38px; }
.region { height: 63px; border: 1px dotted #000; margin-bottom: 18px; color: #1450c8; }
.region.tall { height: 165px; }
.region.tail { margin-bottom: 19px; }
.region span { display: inline-block; height: 26px; line-height: 25px; padding: 0 9px 0 6px; background: #e7edf7; border-radius: 0 0 5px; vertical-align: top; }
.inner { height: 100px; margin: 12px 25px 0; border: 2px solid #8b8b8b; border-radius: 5px; }
.void { height: 126px; background: #eee; margin: 1px 0 18px; }
.side { width: 451px; border-left: 1px solid #cfcfcf; display: flex; flex-direction: column; flex: none; }
.sidetabs { height: 50px; border-bottom: 1px solid #cfcfcf; display: flex; flex: none; line-height: 50px; padding-left: 31px; }
.sidetabs a { height: 49px; }
.sidetabs a:nth-child(2) { margin-left: 61px; }
.sidetabs a:nth-child(3) { margin-left: 70px; }
.sidetabs a:nth-child(4) { margin-left: 78px; }
.sidetabs .on { color: #145ccd; border-bottom: 3px solid #145ccd; }
.filter { height: 50px; flex: none; background: #f1f1f1; border-bottom: 1px solid #cfcfcf; display: flex; align-items: center; justify-content: space-between; padding: 0 15px 0 6px; color: #0b2d7c; }
.filter a { display: flex; align-items: center; gap: 3px; font-size: 15px; padding-bottom: 2px; }
.pick { height: 40px; border: 1px solid #c8c8c8; display: flex; align-items: center; justify-content: space-between; padding: 0 5px 0 15px; color: #111; }
.filter .pick { width: 125px; }
.blocks { flex: 1; display: flex; overflow: hidden; padding: 13px 0 0 12px; justify-content: space-between; }
.list { width: 406px; }
.blk { height: 45px; margin-bottom: 12.500px; border: 1px solid #cfcfcf; background: #f1f1f1; display: flex; align-items: center; justify-content: space-between; padding: 0 7px 3px 9px; }
.blk i { display: flex; align-items: center; color: #06307c; }
.blk svg:nth-child(1) { width: 16px; height: 16px; }
.blk svg:nth-child(2) { width: 13px; height: 13px; margin: 2px 20px 0 19px; }
.blk svg:nth-child(3) { width: 18px; height: 18px; }
.scroll { width: 20px; height: 654px; display: flex; flex-direction: column; margin-top: -1px; }
.scroll i { margin-left: 3px; }
.up, .down { width: 14px; height: 7px; background: #7d7d7d; }
.up { clip-path: polygon(50% 0, 100% 100%, 0 100%); }
.down { clip-path: polygon(0 0, 100% 0, 50% 100%); margin-top: auto; margin-bottom: 4px; }
.scroll .thumb { width: 11px; height: 474px; border-radius: 6px; background: #7d7d7d; margin: 9px 0 0 5px; }
.foot { margin-top: 11px; height: 51px; border-top: 1px solid #cfcfcf; background: #f8f8f8; display: flex; justify-content: space-between; align-items: center; padding: 0 19px 2px 18px; color: #0b2263; }
.foot a { font-size: 18px; }
.foot span { color: #555; display: flex; align-items: center; gap: 6px; }
.foot b { font-weight: 300; font-size: 21px; font-family: "Noto Sans CJK TC"; line-height: 20px; }

.backdrop { position: absolute; inset: 0; background: rgba(0,0,0,.5); }
.modal { position: absolute; left: 556px; top: 110px; width: 748px; height: 608px; background: #fff; box-shadow: 0 8px 25px rgba(0,0,0,.65); display: flex; flex-direction: column; }
.mhead { height: 64px; border-bottom: 1px solid #e5e5e5; display: flex; justify-content: space-between; align-items: center; padding: 0 21px 0 19px; }
.mhead h4 { margin: 0 0 4px; font-size: 16px; font-weight: 500; }
.mhead svg { margin-bottom: 9px; }
form { padding: 26px 0 0 26px; display: flex; flex-direction: column; gap: 15px; }
.row { height: 40px; display: flex; align-items: center; }
label { width: 85px; text-align: right; font-weight: 600; margin-right: 15px; padding-bottom: 3px; color: #222; }
label.latin { padding: 1px 0 0; }
.row input { width: 546px; height: 40px; border: 1px solid #ccc; box-shadow: inset 0 1px 1px #eee; padding: 0 10px; font: inherit; }
.row input::placeholder { color: #777; letter-spacing: .25px; }
.row em { color: #ea4d28; font: bold 24px/24px "Liberation Sans"; margin: 11px 0 0 5px; }
.picks { width: 546px; display: flex; gap: 1px; background: #ccc; }
.modal .pick { background: #fff; width: 294px; box-shadow: inset 0 1px 1px #eee; }
.modal .second { flex: 1; }
.row.file { height: 27px; }
.file button { width: 84px; height: 27px; border: 1px solid #767676; border-radius: 3px; background: #efefef; font: inherit; padding: 0 0 1px; white-space: nowrap; color: #000; }
.file span { margin-left: 5px; color: #333; letter-spacing: .2px; padding-bottom: 1px; }
.save { width: 65px; height: 40px; border: 1px solid #1d70f0; background: #3280fc; color: #fff; font: inherit; padding: 0 0 2px; }
.translate { position: absolute; right: 0; top: 731px; width: 45px; height: 45px; border-radius: 23px 0 0 23px; background: linear-gradient(#cd83a3, #b85986); box-shadow: 0 5px 12px rgba(50,50,50,.35); padding: 9px 0 0 15px; }

.edge { width: 50px; display: flex; flex-direction: column; align-items: center; padding-left: 4px; }
.edge span { height: 50px; display: flex; align-items: center; justify-content: center; flex: none; }
.edge .first { height: 52px; }
.edge .hr { width: 35px; height: 1px; background: #ccc; margin: 15px 0 14px; flex: none; }
.edge .add { position: relative; width: 38px; }
.dot { position: absolute; right: 0; top: 8px; width: 7px; height: 8px; border-radius: 4px; background: #e11; }
.edge .snip { margin-top: auto; height: 26px; }
.edge > span:last-child { height: 30px; margin-bottom: 12px; }

/* taskbar */
.taskbar { height: 50px; flex: none; display: flex; background: linear-gradient(90deg, #ddd5d1 0, #e8d7d7 58px, #f2e6e8 420px, #dfdaea 530px, #eadcea 620px, #efecea 750px, #e1dbea 900px, #eadee8 1080px, #e7e5e8 1160px, #e5e1ee 1270px, #efdfeb 1330px, #e6e1f0 1470px, #f1e6d4 1570px, #f4e4e2 1700px, #f3e5e0 1780px, #ecdfd8 1913px); font-family: "Open Sans", "Noto Sans CJK SC", sans-serif; }
.start { width: 58px; padding: 15px 0 0 18px; }
.search { width: 360px; background: #fff; border: 1px solid #ccc; display: flex; align-items: center; padding-left: 14px; font-size: 19px; color: #333; }
.search span { margin-left: 13px; padding-bottom: 1px; }
.scene { margin-left: auto; align-self: flex-end; }
.apps { display: flex; }
.apps span { width: 57px; height: 50px; display: flex; align-items: center; justify-content: center; flex: none; }
.apps span:nth-child(1) { width: 61px; margin-right: 3px; }
.apps span:nth-child(2) { margin-right: 1px; }
.apps .cur { background: #f5f1f6 linear-gradient(#0078d7, #0078d7) 0 100% / 100% 3px no-repeat; }
.apps span:nth-child(n+4) { width: 57.500px; }
.apps .run { background: linear-gradient(#0078d7, #0078d7) 50% 100% / 46px 3px no-repeat; }
.apps .wide { background: linear-gradient(90deg, #0078d7 37px, #66aeea 37px) 50% 100% / 46px 3px no-repeat; }
.apps .rk { flex-direction: column; line-height: 1; }
.rk b { font: italic bold 23px/19px "Liberation Sans"; letter-spacing: -2px; transform: skewX(-6deg); }
.rk small { font: italic bold 6px/5px "Liberation Sans"; width: 28px; text-align: center; }
.typora { width: 27px; height: 27px; border-radius: 5px; background: #fff; font: bold 20px/27px "Liberation Serif"; text-align: center; color: #333; box-shadow: 0 1px 3px #bbb; }
.tray { margin-left: auto; display: flex; align-items: center; }
.tray > span { width: 40px; display: flex; justify-content: center; }
.ime { font-weight: 500; font-size: 20px; width: 31px; text-align: center; padding-bottom: 2px; }
.pin { font-weight: 400; font-size: 16px; line-height: 17px; width: 20px; height: 20px; border: 1px solid #333; background: #fff; margin-left: 11px; text-align: center; }
.clock { width: 100px; margin-left: 8px; text-align: center; font-size: 15.500px; line-height: 23px; letter-spacing: -.1px; color: #222; }
.msg { display: flex; margin-left: 15px; width: 38px; }
.msg i { width: 20px; height: 20px; border: 1px solid #222; border-radius: 50%; background: #fff; font-size: 14px; line-height: 18px; text-align: center; margin: 10px 0 -10px -5px; flex: none; }
.note { margin: 0 26px 0 20px; }
```
